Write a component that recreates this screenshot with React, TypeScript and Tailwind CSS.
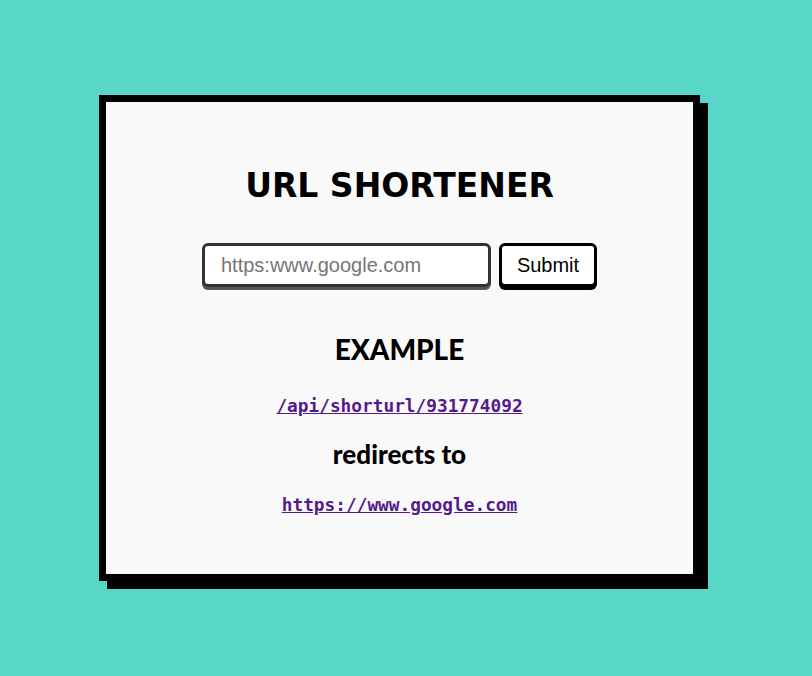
export default function App() {
  return (
    <div className="min-h-[676px] w-full bg-[#58d6c7] pt-[95px] pl-[99px]">
      {/* card */}
      <div className="w-[601px] h-[486px] border-[7px] border-black bg-[#f9f9f9] shadow-[8px_8px_0_#000] flex flex-col items-center">
        <h1 className="mt-[67px] text-[33px] leading-none font-bold text-black font-['DejaVu_Sans',sans-serif]">
          URL SHORTENER
        </h1>

        <form className="mt-[41px] flex items-start gap-[8px]" onSubmit={(e) => e.preventDefault()}>
          <input
            type="text"
            placeholder="https:www.google.com"
            className="w-[289px] h-[44px] px-[16px] rounded-[6px] border-[3px] border-[#333] bg-white shadow-[0_3px_0_#555] text-[20px] text-black placeholder:text-[#767676] font-['Liberation_Sans',sans-serif] outline-none"
          />
          <button
            type="submit"
            className="w-[98px] h-[44px] rounded-[6px] border-[3px] border-black bg-white shadow-[0_3px_0_#000] text-[20px] text-black font-['Liberation_Sans',sans-serif]"
          >
            Submit
          </button>
        </form>

        <h2 className="mt-[48px] text-[28px] leading-none font-black text-black font-['Lato',sans-serif]">
          EXAMPLE
        </h2>
        <a
          href="#"
          className="mt-[34px] text-[17.8px] leading-none font-bold text-[#551a8b] underline font-['DejaVu_Sans_Mono',monospace]"
        >
          /api/shorturl/931774092
        </a>
        <h3 className="mt-[26px] text-[26px] leading-none font-black text-black font-['Lato',sans-serif]">
          redirects to
        </h3>
        <a
          href="#"
          className="mt-[29px] text-[17.8px] leading-none font-bold text-[#551a8b] underline font-['DejaVu_Sans_Mono',monospace]"
        >
          https://www.google.com
        </a>
      </div>
    </div>
  );
}
